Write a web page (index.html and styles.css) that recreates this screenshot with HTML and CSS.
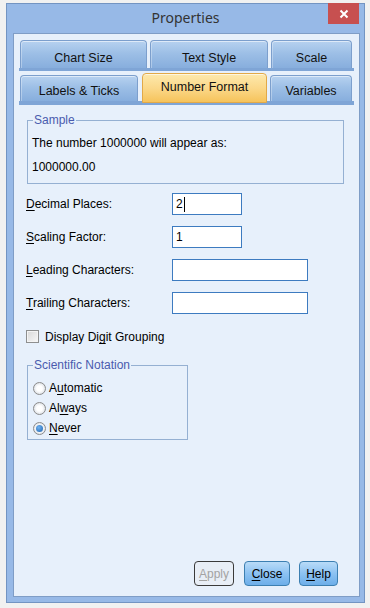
FILE: index.html
```html
<!DOCTYPE html>
<html lang="en">
<head>
    <meta charset="UTF-8">
    <meta name="viewport" content="width=device-width, initial-scale=1.0">
    <title>Properties</title>
    <link rel="stylesheet" href="styles.css">
</head>
<body>
    <div class="window">
        <div class="titlebar">
            <span></span>
            <span class="title">Properties</span>
            <button class="close-btn" type="button">
                <svg width="10" height="10" viewBox="0 0 10 10">
                    <path d="M1.5 1.5 L8.5 8.5 M8.5 1.5 L1.5 8.5" stroke="#fff" stroke-width="2" fill="none"/>
                </svg>
            </button>
        </div>

        <div class="panel">
            <div class="tabs">
                <div class="tab-row">
                    <div class="tab tab-chart">Chart Size</div>
                    <div class="tab tab-text">Text Style</div>
                    <div class="tab tab-scale">Scale</div>
                </div>
                <div class="tab-strip thin"></div>
                <div class="tab-row row-two">
                    <div class="tab tab-labels">Labels &amp; Ticks</div>
                    <div class="tab tab-number active">Number Format</div>
                    <div class="tab tab-vars">Variables</div>
                </div>
                <div class="tab-strip"></div>
            </div>

            <div class="page">
                <fieldset class="group sample">
                    <legend>Sample</legend>
                    <p>The number 1000000 will appear as:</p>
                    <p>1000000.00</p>
                </fieldset>

                <div class="fields">
                    <span class="field-label"><u>D</u>ecimal Places:</span>
                    <div class="field short">2<span class="caret"></span></div>

                    <span class="field-label"><u>S</u>caling Factor:</span>
                    <div class="field short">1</div>

                    <span class="field-label"><u>L</u>eading Characters:</span>
                    <div class="field long"></div>

                    <span class="field-label"><u>T</u>railing Characters:</span>
                    <div class="field long"></div>
                </div>

                <div class="check-row">
                    <span class="checkbox"></span>
                    <span>Display Di<u>g</u>it Grouping</span>
                </div>

                <fieldset class="group notation">
                    <legend>Scientific Notation</legend>
                    <div class="radio-row"><span class="radio"></span><span>A<u>u</u>tomatic</span></div>
                    <div class="radio-row"><span class="radio"></span><span>Al<u>w</u>ays</span></div>
                    <div class="radio-row"><span class="radio checked"></span><span><u>N</u>ever</span></div>
                </fieldset>

                <div class="buttons">
                    <button class="btn disabled" type="button"><u>A</u>pply</button>
                    <button class="btn btn-close" type="button"><u>C</u>lose</button>
                    <button class="btn btn-help" type="button"><u>H</u>elp</button>
                </div>
            </div>
        </div>
    </div>
</body>
</html>
```

FILE: styles.css
```css
* {
    margin: 0;
    padding: 0;
    box-sizing: border-box;
}

body {
    background: #f1f1f1;
    font-family: "Liberation Sans", Arial, sans-serif;
    font-size: 12px;
    color: #000;
    width: 370px;
    height: 608px;
    overflow: hidden;
}

u {
    text-decoration: underline;
    text-underline-offset: 2px;
    text-decoration-skip-ink: none;
}

/* Janela */
.window {
    margin: 3px 0 0 6px;
    width: 359px;
    height: 600px;
    border: 1px solid #7394c2;
    background: #97b9e7;
    display: flex;
    flex-direction: column;
}

.titlebar {
    height: 29px;
    display: grid;
    grid-template-columns: 1fr auto 1fr;
}

.title {
    font-family: "Noto Sans", "Liberation Sans", sans-serif;
    font-size: 14px;
    color: #333;
    padding-top: 4px;
}

.close-btn {
    justify-self: end;
    align-self: start;
    margin: -1px 5px 0 0;
    width: 31px;
    height: 21px;
    border: none;
    background: #c75050;
    display: flex;
    align-items: center;
    justify-content: center;
}

.panel {
    flex: 1;
    margin: 0 4px 5px 6px;
    border: 1px solid #7f9dc6;
    background: #e7f0fb;
    display: flex;
    flex-direction: column;
}

/* Abas */
.tabs {
    padding: 6px 6px 0 6px;
}

.tab-row {
    display: flex;
    gap: 3px;
    align-items: flex-end;
}

.tab {
    height: 28px;
    border: 1px solid #7c9fcd;
    border-bottom: none;
    border-radius: 4px 4px 0 0;
    background: linear-gradient(#b7d2f0, #9dbfe6 45%, #87aedd);
    box-shadow: inset 0 1px 0 rgba(255, 255, 255, 0.55), inset 1px 0 0 rgba(255, 255, 255, 0.3);
    font-size: 12.5px;
    color: #111;
    display: flex;
    align-items: center;
    justify-content: center;
    padding-top: 6px;
}

.tab-chart { width: 127px; }
.tab-text { width: 118px; }
.tab-scale { width: 81px; }

.row-two {
    margin-top: 2px;
}

.row-two .tab {
    height: 26px;
    padding-top: 4px;
}

.tab-labels { width: 118px; margin-right: 1px; }
.tab-number { width: 125px; }
.tab-vars { width: 82px; }

.row-two .tab.active {
    height: 30px;
    margin-bottom: -2px;
    position: relative;
    z-index: 1;
    border-color: #e2a948;
    border-bottom: 1px solid #e2a948;
    background: linear-gradient(#fde9ad, #fbd88a 50%, #f6c35b);
    box-shadow: inset 0 1px 0 rgba(255, 255, 255, 0.6);
    padding-top: 0;
    padding-bottom: 2px;
}

.tab-strip {
    height: 4px;
    margin: 0 -1px;
    width: 335px;
    background: #7fa5d6;
}

.tab-strip.thin {
    height: 3px;
}

/* Página */
.page {
    flex: 1;
    padding: 8px 0 0 12px;
    display: flex;
    flex-direction: column;
}

.group {
    border: 1px solid #95b0d2;
    margin-left: 1px;
}

.group legend {
    color: #4a5bae;
    padding: 0 1px;
    margin-left: 1px;
    line-height: 14px;
}

.sample {
    width: 317px;
    padding: 4px 4px 4px 4px;
}

.sample p {
    line-height: 24px;
}

.fields {
    margin-top: 9px;
    display: grid;
    grid-template-columns: 146px auto;
    row-gap: 11px;
    align-items: center;
    justify-items: start;
}

.field {
    height: 22px;
    border: 1px solid #3d7bc0;
    background: #fff;
    padding: 0 0 0 3px;
    line-height: 20px;
    display: flex;
    align-items: center;
}

.field.short { width: 70px; }
.field.long { width: 136px; }

.caret {
    width: 1px;
    height: 15px;
    background: #000;
    margin-left: 1px;
}

.check-row {
    margin-top: 16px;
    display: flex;
    align-items: center;
    gap: 6px;
    height: 13px;
}

.checkbox {
    width: 13px;
    height: 13px;
    border: 1px solid #8e8f8f;
    background: linear-gradient(135deg, #d8d8d8, #f8f8f8);
    box-shadow: inset 0 0 0 1px #f4f4f4;
}

.notation {
    margin-top: 15px;
    width: 161px;
    padding: 6px 4px 1px 5px;
}

.notation legend {
    margin-left: 0;
}

.radio-row {
    height: 20px;
    display: flex;
    align-items: center;
    gap: 3px;
}

.radio {
    width: 13px;
    height: 13px;
    border-radius: 50%;
    border: 1px solid #8b8b8b;
    background: radial-gradient(circle, #fff 35%, #dfe3e8 75%);
    display: flex;
    align-items: center;
    justify-content: center;
}

.radio.checked::after {
    content: "";
    width: 7px;
    height: 7px;
    border-radius: 50%;
    background: radial-gradient(circle at 40% 35%, #6fb2f0, #1f63b0);
}

/* Botões */
.buttons {
    margin-top: auto;
    margin-bottom: 10px;
    align-self: flex-end;
    margin-right: 21px;
    display: flex;
    gap: 10px;
}

.btn {
    height: 25px;
    border: 1px solid #3c7fb1;
    border-radius: 4px;
    background: linear-gradient(#b9dbf8, #8cc2f2 50%, #6daee9);
    font-family: "Liberation Sans", Arial, sans-serif;
    font-size: 12px;
    color: #000;
    padding: 0;
}

.btn.disabled {
    width: 40px;
    margin-left: 1px;
    border-color: #3a3a3a;
    background: #e8eef6;
    color: #a3a3a3;
}

.btn-close { width: 46px; }
.btn-help { width: 39px; margin-left: -1px; }
```
